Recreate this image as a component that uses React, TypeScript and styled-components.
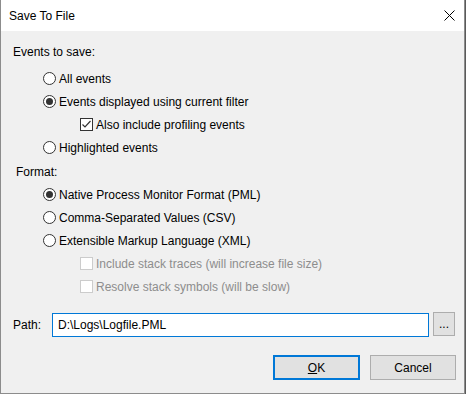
import React from "react";
import styled, { createGlobalStyle } from "styled-components";

const FONT = `"Segoe UI", "Liberation Sans", Arial, sans-serif`;

const Global = createGlobalStyle`
  html, body { margin: 0; padding: 0; background: #5a5a5a; }
  body { font-family: ${FONT}; font-size: 12px; color: #000; }
`;

const Window = styled.div`
  width: 465px;
  height: 394px;
  box-sizing: border-box;
  background: #f0f0f0;
  border-left: 1px solid #8c8c8c;
  border-right: 1px solid #8c8c8c;
  border-bottom: 1px solid #8c8c8c;
  display: flex;
  flex-direction: column;
`;

const TitleBar = styled.div`
  height: 31px;
  flex: none;
  background: #fff;
  display: flex;
  align-items: center;
  justify-content: space-between;
  padding: 0 8px 0 8px;
`;

const Title = styled.span`
  font-size: 12px;
  color: #000;
`;

const CloseX = styled.svg`
  width: 11px;
  height: 11px;
  margin-right: 1px;
`;

const Content = styled.div`
  flex: 1;
  display: flex;
  flex-direction: column;
  padding: 13px 8px 0 12px;
`;

const SectionLabel = styled.div<{ $indent?: number; $mt?: number }>`
  height: 16px;
  line-height: 16px;
  padding-left: ${(p) => p.$indent ?? 0}px;
  margin-top: ${(p) => p.$mt ?? 0}px;
`;

const Options = styled.div<{ $mt: number }>`
  display: flex;
  flex-direction: column;
  margin-top: ${(p) => p.$mt}px;
`;

const OptionRow = styled.div<{ $level: number; $disabled?: boolean }>`
  height: 23px;
  display: flex;
  align-items: center;
  gap: 3px;
  padding-left: ${(p) => (p.$level === 0 ? 30 : 67)}px;
  color: ${(p) => (p.$disabled ? "#8d8d8d" : "#000")};
`;

const RadioCircle = styled.span<{ $checked?: boolean }>`
  width: 13px;
  height: 13px;
  box-sizing: border-box;
  border-radius: 50%;
  border: 1px solid #333;
  background: #fff;
  display: flex;
  align-items: center;
  justify-content: center;
  flex: none;
  &::after {
    content: "";
    display: ${(p) => (p.$checked ? "block" : "none")};
    width: 7px;
    height: 7px;
    border-radius: 50%;
    background: #333;
  }
`;

const CheckBox = styled.span<{ $disabled?: boolean }>`
  width: 13px;
  height: 13px;
  box-sizing: border-box;
  border: 1px solid ${(p) => (p.$disabled ? "#cccccc" : "#333")};
  background: #fff;
  display: flex;
  align-items: center;
  justify-content: center;
  flex: none;
`;

const PathRow = styled.div`
  margin-top: 15px;
  display: flex;
  align-items: center;
  height: 24px;
`;

const PathLabel = styled.span`
  width: 39px;
  flex: none;
`;

const PathInput = styled.div`
  width: 377px;
  height: 24px;
  box-sizing: border-box;
  border: 1px solid #0078d7;
  background: #fff;
  display: flex;
  align-items: center;
  padding-left: 5px;
`;

const BrowseButton = styled.div`
  margin-left: 4px;
  width: 22px;
  height: 24px;
  box-sizing: border-box;
  border: 1px solid #adadad;
  background: #e1e1e1;
  display: flex;
  align-items: center;
  justify-content: center;
  margin-top: -2px;
`;

const ButtonRow = styled.div`
  display: flex;
  justify-content: flex-end;
  gap: 10px;
  margin-top: 18px;
  padding-right: 0px;
`;

const Button = styled.div<{ $default?: boolean }>`
  width: ${(p) => (p.$default ? 87 : 86)}px;
  height: 25px;
  box-sizing: border-box;
  border: ${(p) => (p.$default ? "2px solid #0078d7" : "1px solid #adadad")};
  background: #e1e1e1;
  display: flex;
  align-items: center;
  justify-content: center;
`;

const Mnemonic = styled.span`
  text-decoration: underline;
`;

const Check = () => (
  <svg width="11" height="11" viewBox="0 0 11 11">
    <path d="M1.5 5.5 L4 8 L9.5 2" fill="none" stroke="#333" strokeWidth="1.2" />
  </svg>
);

const Radio: React.FC<{ checked?: boolean; label: string }> = ({ checked, label }) => (
  <OptionRow $level={0}>
    <RadioCircle $checked={checked} />
    <span>{label}</span>
  </OptionRow>
);

const Checkbox: React.FC<{ checked?: boolean; disabled?: boolean; label: string }> = ({
  checked,
  disabled,
  label,
}) => (
  <OptionRow $level={1} $disabled={disabled}>
    <CheckBox $disabled={disabled}>{checked && <Check />}</CheckBox>
    <span>{label}</span>
  </OptionRow>
);

export default function App() {
  return (
    <>
      <Global />
      <Window>
        <TitleBar>
          <Title>Save To File</Title>
          <CloseX viewBox="0 0 11 11">
            <path d="M0.5 0.5 L10.5 10.5 M10.5 0.5 L0.5 10.5" stroke="#000" strokeWidth="1" />
          </CloseX>
        </TitleBar>
        <Content>
          <SectionLabel>Events to save:</SectionLabel>
          <Options $mt={7}>
            <Radio label="All events" />
            <Radio checked label="Events displayed using current filter" />
            <Checkbox checked label="Also include profiling events" />
            <Radio label="Highlighted events" />
          </Options>
          <SectionLabel $indent={3} $mt={5}>
            Format:
          </SectionLabel>
          <Options $mt={3}>
            <Radio checked label="Native Process Monitor Format (PML)" />
            <Radio label="Comma-Separated Values (CSV)" />
            <Radio label="Extensible Markup Language (XML)" />
            <Checkbox disabled label="Include stack traces (will increase file size)" />
            <Checkbox disabled label="Resolve stack symbols (will be slow)" />
          </Options>
          <PathRow>
            <PathLabel>Path:</PathLabel>
            <PathInput>D:\Logs\Logfile.PML</PathInput>
            <BrowseButton>...</BrowseButton>
          </PathRow>
          <ButtonRow>
            <Button $default>
              <span>
                <Mnemonic>O</Mnemonic>K
              </span>
            </Button>
            <Button>Cancel</Button>
          </ButtonRow>
        </Content>
      </Window>
    </>
  );
}
